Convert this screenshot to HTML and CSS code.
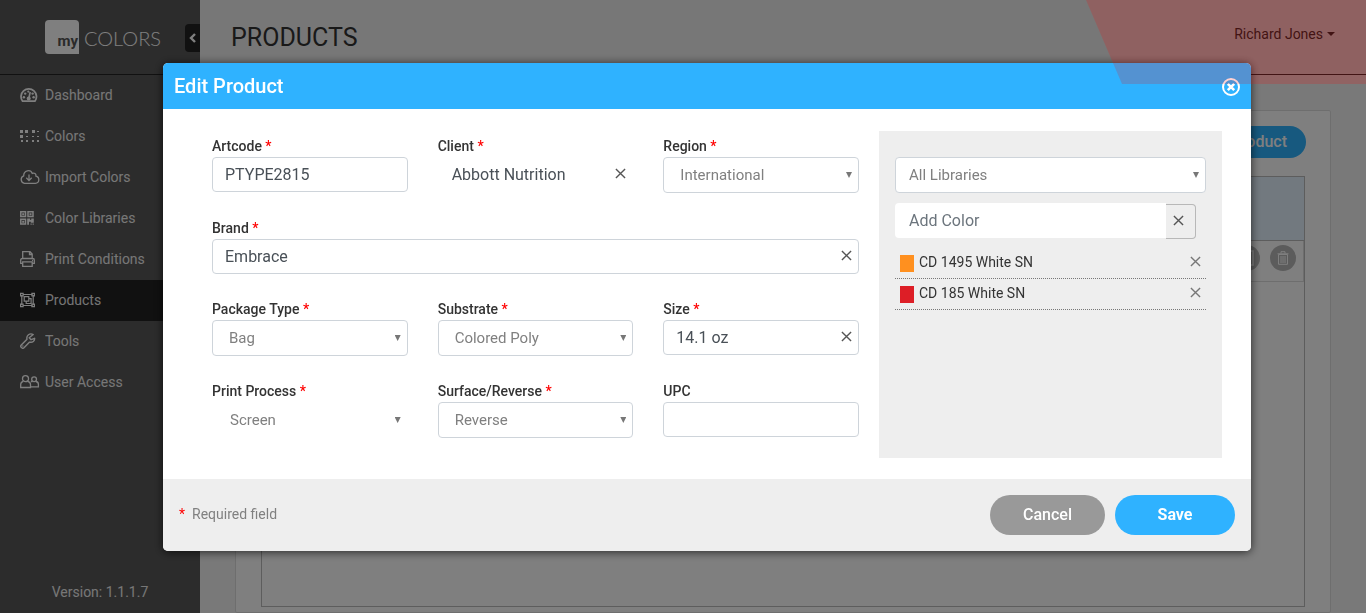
FILE: index.html
```html
<!DOCTYPE html>
<html lang="en">
<head>
<meta charset="utf-8">
<meta name="viewport" content="width=device-width, initial-scale=1">
<title>myCOLORS - Products</title>
<link rel="stylesheet" href="styles.css">
</head>
<body>
<div class="page">
  <aside class="sidebar">
    <div class="brand">
      <span class="brand-box">my</span><span class="brand-name">COLORS</span>
      <button class="collapse" type="button" aria-label="Collapse menu">
        <svg width="7" height="10" viewBox="0 0 7 10"><path d="M6 1L2 5l4 4" fill="none" stroke="currentColor" stroke-width="2.4"/></svg>
      </button>
    </div>
    <nav class="menu">
      <a class="menu-item" href="#"><svg class="icon" viewBox="0 0 20 16" fill="none" stroke="currentColor"><path d="M2.600 14.200A7.700 7.700 0 1 1 14.900 14.200Z" stroke-width="1.800" stroke-linejoin="round"/><path d="M10.200 5L9 10.500" stroke-width="1.600"/><circle cx="8.700" cy="11.600" r="2" fill="currentColor" stroke="none"/><g fill="currentColor" stroke="none"><circle cx="3.900" cy="10.200" r="1.200"/><circle cx="5.200" cy="6.600" r="1.200"/><circle cx="8.300" cy="4.600" r="1.100"/><circle cx="12.600" cy="6.600" r="1.200"/><circle cx="13.600" cy="10.200" r="1.200"/></g></svg><span>Dashboard</span></a>
      <a class="menu-item" href="#"><svg class="icon" viewBox="0 0 20 16" fill="currentColor"><path d="M0 2h3v3H0zM5 2h3v3H5zM12 2h3v3h-3zM17 3h2v1h-2zM0 7h3v3H0zM6 8h2v1H6zM12 8h2v1h-2zM17 8h2v1h-2zM1 12h2v2H1zM6 12h2v2H6zM12 12h2v2h-2zM17 12h2v2h-2z"/></svg><span>Colors</span></a>
      <a class="menu-item" href="#"><svg class="icon" viewBox="0 0 20 16" fill="none" stroke="currentColor" stroke-width="1.300"><path d="M4.500 14.300a3.900 3.900 0 0 1-.8-7.500C3.600 1.300 10.500 0 12.300 4.400c2-1 4 .5 3.600 2.700 4.200 1 3.700 7.200-.5 7.200Z"/><path d="M9 5.500v6M6.300 8.800L9 11.600l2.700-2.800"/></svg><span>Import Colors</span></a>
      <a class="menu-item" href="#"><svg class="icon" viewBox="0 0 20 16"><g fill="none" stroke="currentColor" stroke-width="1.500"><path d="M.8 1.800h4.700v4.700H.8zM8 1.800h5v4.700H8zM.8 9.300h4.700V14H.8z"/></g><path fill="currentColor" d="M2.200 3.200h2v2h-2zM9.500 3.200h2v2h-2zM2.200 10.700h2v2h-2zM7.200 8.500h3V10h1V8.500h2.600v4.300h-3v-1H9v3H7.200zM10.500 13.500h1.200v1.300h-1.200zM12.600 13.500h1.200v1.300h-1.200z"/></svg><span>Color Libraries</span></a>
      <a class="menu-item" href="#"><svg class="icon" viewBox="0 0 20 16" fill="none" stroke="currentColor" stroke-width="1.300"><path d="M2.700 7.500V.7H10L12.200 3v4.500M9.500.7v2.800h2.700M2.700 12.300H.7V9q0-1.500 1.500-1.500h10.600q1.500 0 1.500 1.500v3.300h-2.100"/><path d="M2.700 10.800h9.500v4.500H2.700z"/><path d="M12 9.300h1"/></svg><span>Print Conditions</span></a>
      <a class="menu-item active" href="#"><svg class="icon" viewBox="0 0 20 16" fill="none" stroke="currentColor" stroke-width="1.200"><path d="M1.800 3v10M13.200 3v10M3 2.500h9.500M3 13.500h9.500"/><path d="M.6 1.300h2.500v2.500H.6zM11.900 1.300h2.500v2.500h-2.500zM.6 12.200h2.500v2.500H.6zM11.900 12.200h2.500v2.500h-2.500z"/><path d="M4.200 4.700h4.600v4.500H4.200zM9.200 6.700h1.900v4.800H6.200V9.400"/></svg><span>Products</span></a>
      <a class="menu-item" href="#"><svg class="icon" viewBox="0 0 20 16" fill="none" stroke="currentColor" stroke-width="1.400" stroke-linejoin="round"><path d="M13.200 1.500C9.800-.3 6 2.500 7 6.300L1.300 12c-1.600 1.800 1 4.300 2.700 2.700l5.600-5.600c3 .8 5.300-1.300 5-3.800l-3.500 1.400-1.900-1.900Z"/><path d="M2.800 12.500v1"/></svg><span>Tools</span></a>
      <a class="menu-item" href="#"><svg class="icon" viewBox="0 0 20 16" fill="none" stroke="currentColor" stroke-width="1.300"><circle cx="5.500" cy="4.700" r="3"/><path d="M3.300 7.300Q.7 8 .7 10.500v3h9.800v-3Q10.500 8 7.700 7.300"/><circle cx="14.100" cy="5.200" r="2.400"/><path d="M12.500 7.500h-1.700M15.800 7.500q2.600.3 2.600 2.800v2.500h-7.700"/></svg><span>User Access</span></a>
    </nav>
    <div class="version">Version: 1.1.1.7</div>
  </aside>
  <main class="main">
    <header class="topbar">
      <h1 class="title">PRODUCTS</h1>
      <button class="user" type="button">Richard Jones<span class="caret"></span></button>
    </header>
    <section class="card">
      <div class="card-actions"><button class="new-product" type="button">New Product</button></div>
      <div class="table-wrap">
        <table class="table">
          <thead><tr><th></th></tr></thead>
          <tbody><tr><td>
            <div class="row-actions">
              <button class="round" type="button" aria-label="Copy"><svg width="14" height="16" viewBox="0 0 14 16" fill="none" stroke="currentColor" stroke-width="1.500"><path d="M1 1h12v14H1zM4 5h6v6H4z"/></svg></button>
              <button class="round" type="button" aria-label="Delete"><svg width="12" height="14" viewBox="0 0 12 14" fill="none" stroke="currentColor"><path d="M1.500 3.500h9v9.800h-9z"/><path d="M.5 2.800h11M4 2.500V.7h4v1.800M4 5v7M6 5v7M8 5v7"/></svg></button>
            </div>
          </td></tr></tbody>
        </table>
      </div>
    </section>
  </main>
</div>

<div class="overlay">
  <form class="modal" role="dialog" aria-labelledby="modal-title">
    <header class="modal-head">
      <h2 class="modal-title" id="modal-title">Edit Product</h2>
      <button class="close" type="button" aria-label="Close"><svg width="18" height="18" viewBox="0 0 18 18" fill="none" stroke="currentColor"><circle cx="9" cy="9" r="8" stroke-width="2"/><path d="M5.800 5.800l6.400 6.400M12.200 5.800l-6.400 6.400" stroke-width="2.600"/></svg></button>
    </header>
    <div class="modal-body">
      <div class="fields">
        <div class="field">
          <label for="artcode">Artcode <span class="req">*</span></label>
          <input class="control" id="artcode" type="text" value="PTYPE2815">
        </div>
        <div class="field">
          <label for="client">Client <span class="req">*</span></label>
          <div class="box plain"><input class="control" id="client" type="text" value="Abbott Nutrition"><button class="clear" type="button" aria-label="Clear client"><svg class="x" viewBox="0 0 12 12"><path d="M1 1l10 10M11 1L1 11"/></svg></button></div>
        </div>
        <div class="field">
          <label for="region">Region <span class="req">*</span></label>
          <div class="box"><select class="control" id="region"><option>International</option></select></div>
        </div>
        <div class="field wide">
          <label for="brand">Brand <span class="req">*</span></label>
          <div class="box"><input class="control" id="brand" type="text" value="Embrace"><button class="clear" type="button" aria-label="Clear brand"><svg class="x" viewBox="0 0 12 12"><path d="M1 1l10 10M11 1L1 11"/></svg></button></div>
        </div>
        <div class="field">
          <label for="package">Package Type <span class="req">*</span></label>
          <div class="box"><select class="control" id="package"><option>Bag</option></select></div>
        </div>
        <div class="field">
          <label for="substrate">Substrate <span class="req">*</span></label>
          <div class="box"><select class="control" id="substrate"><option>Colored Poly</option></select></div>
        </div>
        <div class="field">
          <label for="size">Size <span class="req">*</span></label>
          <div class="box"><input class="control" id="size" type="text" value="14.1 oz"><button class="clear" type="button" aria-label="Clear size"><svg class="x" viewBox="0 0 12 12"><path d="M1 1l10 10M11 1L1 11"/></svg></button></div>
        </div>
        <div class="field">
          <label for="process">Print Process <span class="req">*</span></label>
          <div class="box plain"><select class="control" id="process"><option>Screen</option></select></div>
        </div>
        <div class="field">
          <label for="surface">Surface/Reverse <span class="req">*</span></label>
          <div class="box"><select class="control" id="surface"><option>Reverse</option></select></div>
        </div>
        <div class="field">
          <label for="upc">UPC</label>
          <input class="control" id="upc" type="text">
        </div>
      </div>
      <div class="colors">
        <div class="box library"><select class="control" aria-label="Color library"><option>All Libraries</option></select></div>
        <div class="add-color"><input class="add-input" type="text" placeholder="Add Color" aria-label="Add Color"><button class="add-clear" type="button" aria-label="Clear color"><svg class="x" viewBox="0 0 12 12"><path d="M1 1l10 10M11 1L1 11"/></svg></button></div>
        <ul class="color-list">
          <li class="color-row"><span class="swatch orange"></span><span class="color-name">CD 1495 White SN</span><button class="remove" type="button" aria-label="Remove CD 1495 White SN"><svg class="x" viewBox="0 0 12 12"><path d="M1 1l10 10M11 1L1 11"/></svg></button></li>
          <li class="color-row"><span class="swatch red"></span><span class="color-name">CD 185 White SN</span><button class="remove" type="button" aria-label="Remove CD 185 White SN"><svg class="x" viewBox="0 0 12 12"><path d="M1 1l10 10M11 1L1 11"/></svg></button></li>
        </ul>
      </div>
    </div>
    <footer class="modal-foot">
      <p class="note"><span class="req">*</span>Required field</p>
      <div class="foot-actions">
        <button class="pill cancel" type="button">Cancel</button>
        <button class="pill save" type="submit">Save</button>
      </div>
    </footer>
  </form>
</div>
<div class="ribbon"></div>
</body>
</html>
```
FILE: styles.css
```css
* { box-sizing: border-box; }
body {
  margin: 0;
  font-family: Roboto, "Liberation Sans", sans-serif;
  font-size: 14px;
  color: #333;
  background: #f3f3f3;
}
button { font-family: inherit; padding: 0; border: 0; background: none; cursor: pointer; }
svg { display: block; }

.page { display: flex; height: 100vh; }

/* Sidebar */
.sidebar { width: 200px; flex: none; display: flex; flex-direction: column; background: #595959; color: #fff; }
.brand { position: relative; height: 75px; display: flex; align-items: center; gap: 5px; padding-left: 45px; border-bottom: 1px solid #222; }
.brand-box {
  width: 34px; height: 34px;
  display: flex; align-items: flex-end; justify-content: flex-end;
  padding: 0 1px 4px 0;
  border-radius: 4px 4px 0 4px;
  background: #fff; color: #555;
  font-weight: 700; font-size: 15px; line-height: 18px;
}
.brand-name { font-family: Lato, sans-serif; font-weight: 300; font-size: 20px; line-height: 30px; padding-top: 2px; }
.collapse {
  position: absolute; right: 0; top: 24px;
  width: 15px; height: 28px;
  display: flex; align-items: center; justify-content: center;
  border-radius: 4px 0 0 4px;
  background: #222; color: #fff;
}
.menu { flex: 1; }
.menu-item { display: flex; align-items: center; gap: 5px; height: 41px; padding: 0 0 2px 20px; color: #fff; text-decoration: none; font-size: 14px; }
.menu-item.active { background: #222; }
.icon { width: 20px; height: 16px; flex: none; }
.menu-item span, .version { opacity: .9; }
.version { height: 41px; text-align: center; line-height: 40px; }

/* Page content */
.main { flex: 1; display: flex; flex-direction: column; }
.topbar { height: 75px; display: flex; align-items: center; justify-content: space-between; padding: 0 31px; background: #eee; border-bottom: 1px solid #333; }
.title { margin: 0; font-size: 25px; font-weight: 400; }
.user { display: flex; align-items: center; gap: 4px; font-size: 14px; color: #333; padding-bottom: 7px; }
.caret { border: 4px solid transparent; border-top-color: currentColor; border-bottom: 0; }
.card { flex: 1; display: flex; flex-direction: column; gap: 18px; margin: 35px 35px 0; padding: 15px 25px 5px; background: #fff; border: 1px solid #ddd; border-radius: 2px; }
.card-actions { display: flex; justify-content: flex-end; margin-right: -1px; }
.new-product { height: 32px; padding: 0 19px 2px; border-radius: 16px; background: #2fb2ff; color: #fff; font-size: 16px; font-weight: 500; }
.table-wrap { flex: 1; border: 1px solid #bbb; }
.table { width: 100%; border-collapse: collapse; }
.table th { height: 63px; padding: 0; background: #e4f2ff; border-bottom: 1px solid #bbb; }
.table td { height: 41px; padding: 0 7px 5px; border-bottom: 1px solid #ddd; border-right: 1px solid #ddd; }
.row-actions { display: flex; justify-content: flex-end; gap: 10px; }
.round { width: 26px; height: 26px; display: flex; align-items: center; justify-content: center; border-radius: 50%; background: #b8b8b8; color: #fff; }

/* Dialog */
.overlay { position: fixed; inset: 0; padding: 63px 115px 0 163px; background: rgba(0, 0, 0, .5); }
.modal { border-radius: 5px; overflow: hidden; background: #fff; box-shadow: 0 1px 10px rgba(0, 0, 0, .7); }
.modal-head { display: flex; align-items: center; justify-content: space-between; height: 46px; padding: 0 11px; background: #2fb2ff; color: #fff; }
.modal-title { margin: 0; font-size: 20px; font-weight: 500; }
.close { color: #fff; padding-top: 2px; }
.modal-body { display: grid; grid-template-columns: 647fr 343fr; gap: 20px; padding: 22px 29px 21px 49px; }
.fields { display: grid; grid-template-columns: repeat(3, 1fr); gap: 25px 30px; align-content: start; padding: 5px 0 20px; }
.wide { grid-column: 1 / -1; }
.field label { display: block; line-height: 21px; font-size: 14px; font-weight: 500; }
.req { color: #f00; }
.control {
  display: block; width: 100%; height: 35px;
  margin: 0; padding: 0 12px;
  border: 1px solid #ced4da; border-radius: 4px;
  background: #fff; color: #495057;
  font-family: inherit; font-size: 16px;
  appearance: none;
}
select.control { height: 36px; padding: 0 16px; color: #808080; font-size: 15px; }
.library select.control { padding: 0 13px; }
.box { position: relative; }
.box:has(select)::after {
  content: ""; position: absolute; right: 7px; top: 15px;
  width: 6px; height: 6px;
  background: #777; clip-path: polygon(0 0, 100% 0, 50% 100%);
  pointer-events: none;
}
.plain .control { border-color: transparent; padding-left: 13px; }
.plain select.control { padding-left: 17px; }
.clear { position: absolute; right: 6px; top: 0; height: 35px; padding: 0 1px 2px; }
.x { width: 11px; height: 11px; fill: none; stroke: #555; stroke-width: 1.5; }

.colors { padding: 26px 16px 0; background: #eee; }
.add-color { display: flex; margin: 10px 10px 8px 0; }
.add-input { flex: 1; min-width: 0; height: 35px; padding: 0 14px; border: 0; border-radius: 4px 0 0 4px; background: #fff; color: #495057; font-family: inherit; font-size: 16px; }
.add-input::placeholder { color: #6c757d; }
.add-clear { width: 30px; height: 35px; margin-top: 1px; display: flex; align-items: center; justify-content: center; padding: 0 4px 2px 0; border: 1px solid #b8b8b8; border-left: 0; border-radius: 0 4px 4px 0; }
.color-list { margin: 0; padding: 1px 0 0; list-style: none; }
.color-row { display: flex; align-items: center; gap: 5px; height: 31px; padding: 0 5px; border-bottom: 1px dotted #777; }
.swatch { width: 14px; height: 17px; }
.orange { background: #ff901f; }
.red { background: #dd1e26; }
.color-name { flex: 1; padding-bottom: 2px; }
.remove { padding-bottom: 3px; }
.remove .x { stroke: #777; }

.modal-foot { display: flex; align-items: center; justify-content: space-between; min-height: 72px; padding: 0 16px; background: #eee; }
.note { display: flex; gap: 7px; margin: 0; padding-bottom: 2px; color: #808080; }
.foot-actions { display: flex; gap: 10px; }
.pill { height: 40px; padding-bottom: 2px; border-radius: 20px; color: #fff; font-size: 16px; font-weight: 500; }
.cancel { width: 115px; background: #999; }
.save { width: 120px; background: #2fb2ff; font-weight: 700; }

.ribbon { position: fixed; top: 0; right: 0; width: 280px; height: 84px; background: rgba(255, 0, 0, .18); clip-path: polygon(0 0, 100% 0, 100% 100%, 36px 100%); pointer-events: none; }
```
